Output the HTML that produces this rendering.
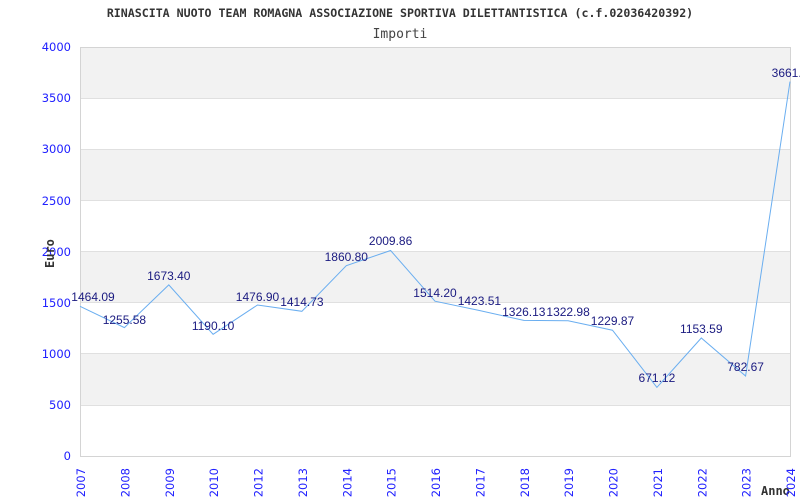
<!DOCTYPE html>
<html><head><meta charset="utf-8"><style>body{margin:0;background:#fff}svg{display:block}</style></head>
<body>
<svg width="800" height="500" xmlns="http://www.w3.org/2000/svg">
<rect width="800" height="500" fill="#fff"/>
<g fill="#f2f2f2">
<rect x="80" y="47" width="710" height="51.1"/>
<rect x="80" y="149.3" width="710" height="51.1"/>
<rect x="80" y="251.5" width="710" height="51.1"/>
<rect x="80" y="353.8" width="710" height="51.1"/>
</g>
<g stroke="#e0e0e0" stroke-width="1">
<line x1="80" x2="790" y1="98.5" y2="98.5"/><line x1="80" x2="790" y1="149.5" y2="149.5"/>
<line x1="80" x2="790" y1="200.5" y2="200.5"/><line x1="80" x2="790" y1="251.5" y2="251.5"/>
<line x1="80" x2="790" y1="302.5" y2="302.5"/><line x1="80" x2="790" y1="353.5" y2="353.5"/>
<line x1="80" x2="790" y1="405.5" y2="405.5"/>
</g>
<rect x="80.5" y="47.5" width="710" height="409" fill="none" stroke="#d4d4d4"/>
<g font-family="DejaVu Sans Mono, monospace" text-anchor="middle">
<text x="400" y="17" font-size="11.6" font-weight="bold" fill="#333">RINASCITA NUOTO TEAM ROMAGNA ASSOCIAZIONE SPORTIVA DILETTANTISTICA (c.f.02036420392)</text>
<text x="400" y="38" font-size="13" fill="#444">Importi</text>
</g>
<g font-family="DejaVu Sans, sans-serif" font-size="11.5" fill="#2020ff" text-anchor="end">
<text x="71" y="51">4000</text><text x="71" y="102">3500</text><text x="71" y="153">3000</text>
<text x="71" y="205">2500</text><text x="71" y="256">2000</text><text x="71" y="307">1500</text>
<text x="71" y="358">1000</text><text x="71" y="409">500</text><text x="71" y="460">0</text>
</g>
<text transform="translate(54,268) rotate(-90)" font-family="DejaVu Sans Mono, monospace" font-size="12" font-weight="bold" fill="#333">Euro</text>
<text x="761" y="495" font-family="DejaVu Sans Mono, monospace" font-size="12" font-weight="bold" fill="#333">Anno</text>
<polyline fill="none" stroke="#6aaef0" stroke-width="1" points="80,306.3 124.4,327.6 168.8,284.9 213.1,334.3 257.5,305 301.9,311.3 346.3,265.7 390.6,250.5 435,301.2 479.4,310.5 523.8,320.4 568.1,320.7 612.5,330.2 656.9,387.4 701.3,338 745.6,376 790,81.6"/>
<g font-family="Liberation Sans, sans-serif" font-size="12" fill="#1a1a80" text-anchor="middle">
<text x="93" y="301">1464.09</text><text x="124.4" y="324">1255.58</text><text x="168.8" y="280">1673.40</text>
<text x="213.1" y="330">1190.10</text><text x="257.5" y="301">1476.90</text><text x="301.9" y="306">1414.73</text>
<text x="346.3" y="261">1860.80</text><text x="390.6" y="245">2009.86</text><text x="435" y="297">1514.20</text>
<text x="479.4" y="305">1423.51</text><text x="523.8" y="316">1326.13</text><text x="568.1" y="316">1322.98</text>
<text x="612.5" y="325">1229.87</text><text x="656.9" y="382">671.12</text><text x="701.3" y="333">1153.59</text>
<text x="745.6" y="371">782.67</text><text x="790" y="77">3661.5</text>
</g>
<g font-family="DejaVu Sans, sans-serif" font-size="11.5" fill="#2020ff" text-anchor="end">
<text transform="translate(85,468) rotate(-90)">2007</text>
<text transform="translate(129.4,468) rotate(-90)">2008</text>
<text transform="translate(173.8,468) rotate(-90)">2009</text>
<text transform="translate(218.1,468) rotate(-90)">2010</text>
<text transform="translate(262.5,468) rotate(-90)">2012</text>
<text transform="translate(306.9,468) rotate(-90)">2013</text>
<text transform="translate(351.3,468) rotate(-90)">2014</text>
<text transform="translate(395.6,468) rotate(-90)">2015</text>
<text transform="translate(440,468) rotate(-90)">2016</text>
<text transform="translate(484.4,468) rotate(-90)">2017</text>
<text transform="translate(528.8,468) rotate(-90)">2018</text>
<text transform="translate(573.1,468) rotate(-90)">2019</text>
<text transform="translate(617.5,468) rotate(-90)">2020</text>
<text transform="translate(661.9,468) rotate(-90)">2021</text>
<text transform="translate(706.3,468) rotate(-90)">2022</text>
<text transform="translate(750.6,468) rotate(-90)">2023</text>
<text transform="translate(795,468) rotate(-90)">2024</text>
</g>
</svg>
</body></html>
